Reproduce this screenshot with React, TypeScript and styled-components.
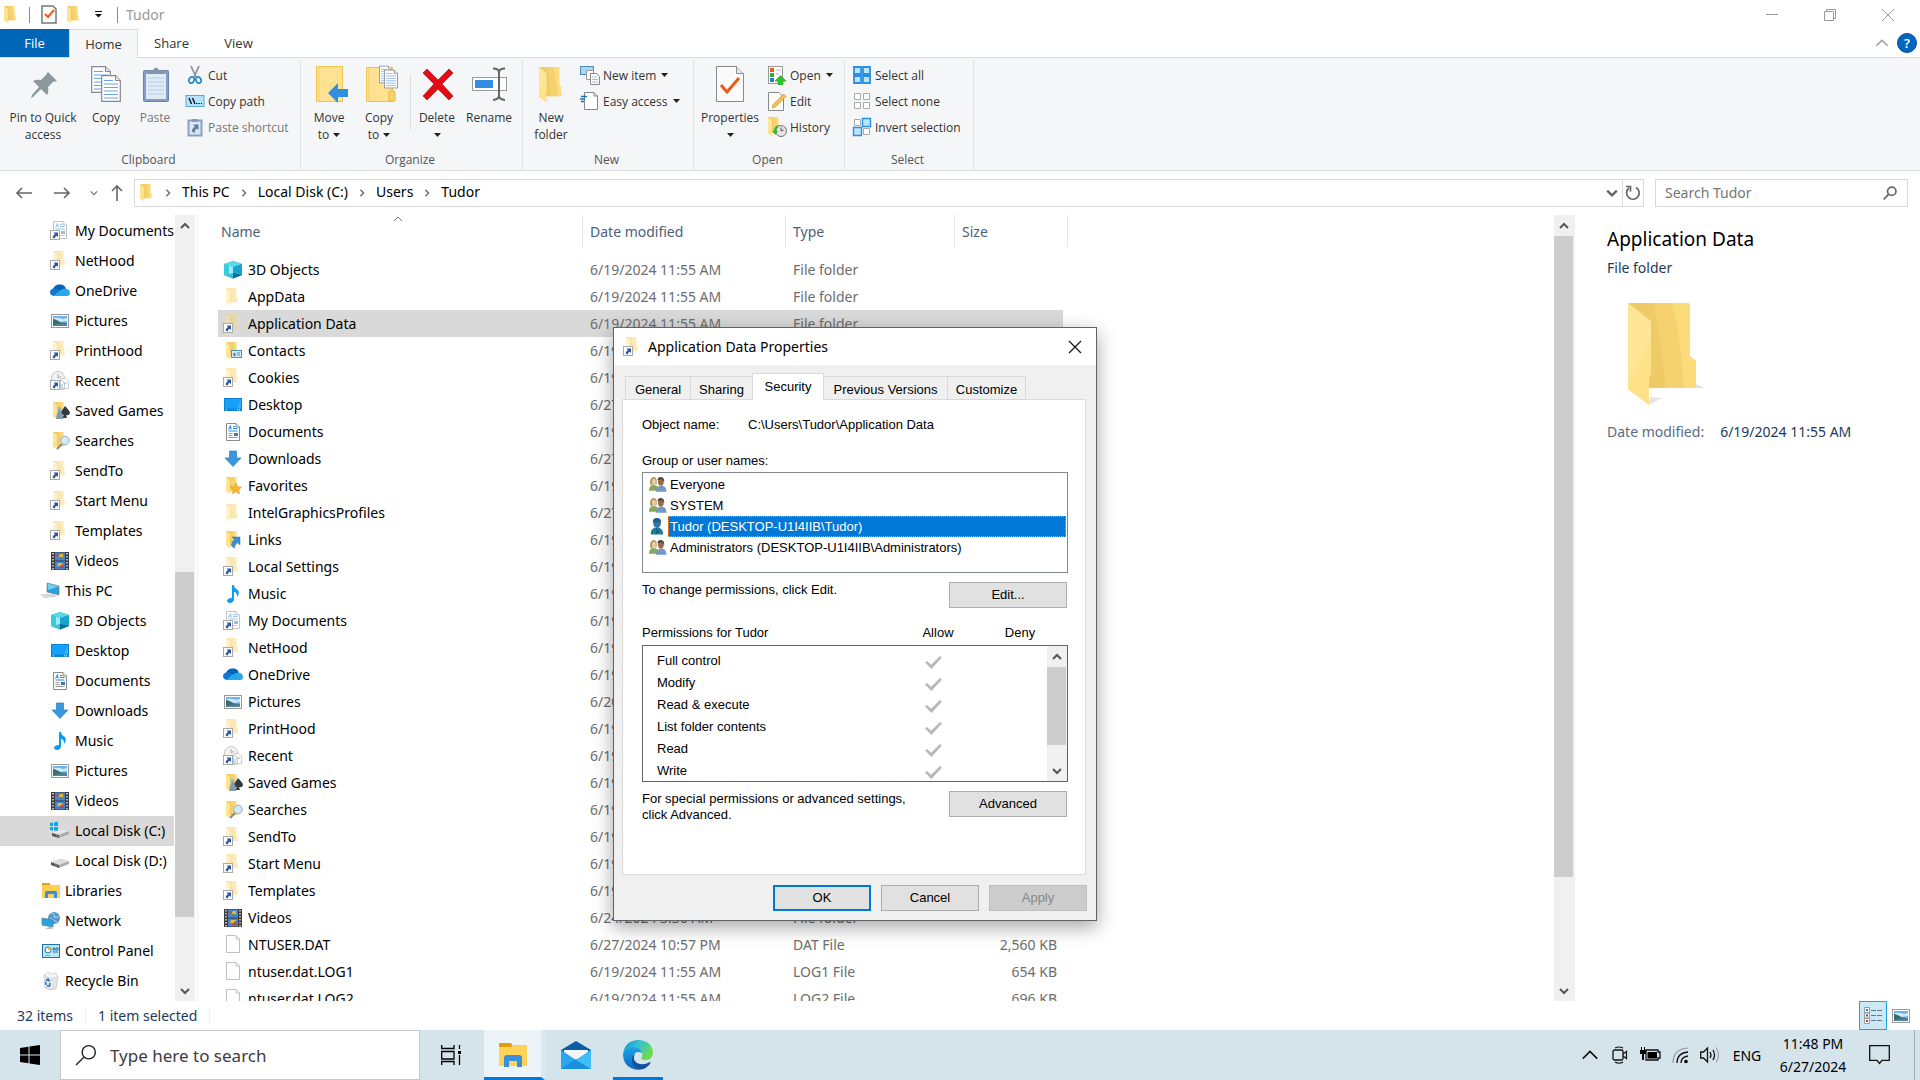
import React from "react";
import styled, { createGlobalStyle, css } from "styled-components";

const ui = `"Noto Sans", "Open Sans", sans-serif`;
const ribbonUi = `"Open Sans", "Noto Sans", sans-serif`;
const classic = `"Liberation Sans", Arial, sans-serif`;

const Global = createGlobalStyle`
  * { box-sizing: border-box; }
  body { margin: 0; background: #fff; font: 14px/20px ${ui}; color: #000; overflow: hidden; }
  button, input { font: inherit; color: inherit; }
  button { border: 0; padding: 0; background: none; }
  ul { list-style: none; margin: 0; padding: 0; }
  a { color: inherit; text-decoration: none; }
  svg { display: block; flex: none; }
`;

/* ---------- drawings ---------- */

const FolderShape = ({ x = 3, y = 1, w = 13, h = 17, pale = false }: { x?: number; y?: number; w?: number; h?: number; pale?: boolean }) => (
  <svg x={x} y={y} width={w} height={h} viewBox="0 0 76 102" preserveAspectRatio="none" opacity={pale ? 0.5 : 1}>
    <path d="M21 102L34 95 22 94zM68 85h9l-9-4z" fill="#e4e4e4" />
    <path d="M0 0H60Q62 0 62 2V53L68 58V85H21L10 50z" fill="#fbdb7a" />
    <path d="M0 0H26Q34 40 38 85H21L10 50z" fill="#efcb66" />
    <path d="M26 0H44Q54 40 56 85H38Q34 40 26 0z" fill="#f5d26f" />
    <path d="M0 0L23 18V71L21 75V102L0 86z" fill="#ffe596" />
    <path d="M23 36V71L21 75V102L0 86V80z" fill="#ffe18a" />
  </svg>
);

const Link = () => (
  <g>
    <rect x=".5" y="9.5" width="9" height="9" fill="#fff" stroke="#aaa" />
    <path d="M3.500 11.500H8V16L6.500 14.700Q5 15.600 4.800 17.400L2.500 16.600Q3 14 5 13z" fill="#2c56a0" />
  </g>
);

const Doc = ({ x = 3, y = 1 }: { x?: number; y?: number }) => (
  <g transform={`translate(${x} ${y})`}>
    <path d="M.5.5H10L13.500 4V17.500H.5z" fill="#fff" stroke="#8a8a8a" />
    <path d="M10 .5V4H13.500" fill="#eee" stroke="#8a8a8a" />
    <path d="M2.500 6.500L4.500 2.500 5.200 6.500M3 5h2M7 3.500h2M7 5.500h4.500M2.500 8h9" stroke="#2a8fd8" fill="none" />
    <path d="M2.500 10.500h4M2.500 12.500h4M2.500 14.500h9" stroke="#999" />
    <rect x="8" y="10" width="4" height="3" fill="#3b7bb5" />
  </g>
);

const LinkedFolder = () => <><FolderShape pale y={0} /><Link /></>;

const glyphs: Record<string, React.ReactNode> = {
  folder: <FolderShape />,
  pale: <FolderShape pale />,
  link: <LinkedFolder />,
  mydocs: <><g opacity=".5"><Doc x={3} y={0} /></g><Link /></>,
  onedrive: <><path d="M3 8Q5 3 10 3.500Q14 3 16 7.500L8 12z" fill="#0364b8" /><path d="M4 15Q0 14.500 0 11Q.5 7.500 4 7.500Q8 7 11 11z" fill="#0f78d4" /><path d="M4 15Q9 9 13 8Q19.500 7 20 12Q20 15 17 15z" fill="#28a8ea" /></>,
  pictures: <><rect x="1.500" y="3.500" width="17" height="13" fill="#fff" stroke="#999" /><path d="M3 5H17V12H3z" fill="#6db4ee" /><path d="M3 7Q8 6 13 8L17 7V10L10 11z" fill="#cfe9fa" /><path d="M3 8Q8 9 11 11.500L17 12V15H3z" fill="#376e66" /><path d="M6 13l11-1v3H3z" fill="#557fa5" /></>,
  recent: <><circle cx="8" cy="7" r="6.500" fill="#f4f4f4" stroke="#c5c5c5" /><path d="M8 3v4l3-2" stroke="#aaa" fill="none" /><path d="M10.500 7.500h5l3 3v7h-8zM7.500 9.500h5l2 2v7h-7z" fill="#fff" stroke="#ccc" /><path d="M9 14h4M9 16h4M13 12h4" stroke="#8dbce4" /><Link /></>,
  games: <><FolderShape /><path d="M15 5Q20 10 20 12Q19 15 16 14L17 17H12L14 14Q10 14 11 11z" fill="#333a40" /><circle cx="9.500" cy="8" r="2.200" fill="#9eb9cb" /><path d="M9.500 8Q13 12 13 18H6Q6 13 9.500 8z" fill="#7f9bad" /></>,
  searches: <><FolderShape /><path d="M7 18l5-5" stroke="#888" strokeWidth="2" /><circle cx="15" cy="9.500" r="4.300" fill="#cfe9fa" stroke="#9aaebb" /></>,
  videos: <><path d="M1 1H19V19H1z" fill="#3b3b3b" /><path d="M5 1.500h10v8H5zM5 10.500h10v8H5z" fill="#4484d0" /><path d="M10 3h3v4h-5zM8 12h5l-1 3H7z" fill="#e9b933" /><path d="M6 3l3 1-1 3zM12 13l2 4h-5z" fill="#c2453b" /><path d="M9 6h4l-3 2z" fill="#3c8a4a" /><path d="M3 2v17M17 2v17" stroke="#ddd" strokeWidth="1.500" strokeDasharray="1.500 1.500" /></>,
  pc: <><path d="M6 2L18 5V14L6 11z" fill="#2c9fd9" stroke="#777" strokeWidth=".6" /><path d="M6.500 2.500L17.500 5.500 7 9z" fill="#6dd0f7" /><path d="M11 13l4 2-4 1zM0 14l8-1 3 2-7 2z" fill="#ddd" stroke="#bbb" strokeWidth=".5" /></>,
  cube: <><path d="M10 1L19 4V15L10 18.500 1 15V4z" fill="#15a5cf" /><path d="M10 1L19 4 10 7 1 4z" fill="#5bdae5" /><path d="M1 4L10 7V18.500L1 15z" fill="#9eedf4" /><path d="M1 4L6 5.500V14L1 15z" fill="#37cbdc" /><path d="M10 13L19 15 10 18.500z" fill="#096b99" /><path d="M10 13V18.500L1 15z" fill="#3dbfda" /></>,
  desktop: <><rect x="1" y="3" width="18" height="13" fill="#0b84d8" /><path d="M2 4H18V13.500H2z" fill="#16a0fa" /><path d="M14 13.500L18 4v9.500z" fill="#35b0ff" /><path d="M3 14.800h1M14 14.800h1M16 14.800h1" stroke="#fff" /></>,
  documents: <Doc />,
  downloads: <path d="M6.500 2h7v7h4.500L10 17.500 2 9H6.500z" fill="#3a96dd" stroke="#2d7fc4" strokeWidth=".7" />,
  music: <path d="M9 1h2q0 3 4 5 2 3-1 7 0-5-3-5v8q-1 3-4 3-3-.5-3-2.500 1-3 5-2.500z" fill="#0c9df2" />,
  osdisk: <><path d="M0 2l3-.5v3.500H0zM4 1.300l4-.5V5H4zM0 6h3v3.500L0 9zM4 6h4v4l-4-.5z" fill="#00adef" /><path d="M2 12L11 8 19 10 9 14z" fill="#e4e4e4" /><path d="M2 12L9 14V17L2 15z" fill="#555" /><path d="M9 14L19 10V13L9 17z" fill="#aaa" /><path d="M6 14.500l2 .5" stroke="#4c4" /></>,
  disk: <><path d="M1 11L11 7.500 19 10 9 14z" fill="#ddd" /><path d="M1 11L9 14V17L1 14z" fill="#555" /><path d="M9 14L19 10V13L9 17z" fill="#aaa" /><path d="M5 14l2 .7" stroke="#4c4" /></>,
  libraries: <><path d="M1 2H8L10 4H1z" fill="#e8a10c" /><path d="M1 4H19V17H1z" fill="#ffcf52" /><path d="M4 17V11.500Q4 10 5.500 10H14.500Q16 10 16 11.500V17H13V13H7V17z" fill="#3a8fdb" /></>,
  network: <><circle cx="13" cy="7" r="6" fill="#5199cc" /><path d="M10 2q5 1 3 4 4 1 5-1M9 7l7 4" stroke="#b5dff5" fill="none" /><path d="M1 7L12 9V16L1 14z" fill="#27a3dd" stroke="#4f7a95" strokeWidth=".7" /><path d="M4 18h8l-2-2H8z" fill="#bbb" /></>,
  control: <><rect x="1.500" y="3.500" width="17" height="13" fill="#bce6fb" stroke="#1673ac" /><circle cx="7" cy="9" r="3" fill="#fff" stroke="#1673ac" /><path d="M7 9V6a3 3 0 0 1 3 3z" fill="#f5b91c" /><path d="M12 7h2v2h-2zM15 7h2v2h-2zM12 11h5" stroke="#1673ac" fill="#fff" /><path d="M4 14.500h5" stroke="#f28c1c" /></>,
  recycle: <><path d="M3 4L14 3 17 6 15 18 9 19 4 17z" fill="#e3e5e7" stroke="#bbb" strokeWidth=".6" /><path d="M3 4l4-3 4 2 4-1 2 4-7 2z" fill="#f5f5f5" stroke="#c5c5c5" strokeWidth=".6" /><path d="M5 10l2-2 1.500 2.500M9 12l-.5 3H6M5 14l-.5-3" stroke="#2274c7" strokeWidth="1.500" fill="none" /></>,
  contacts: <><FolderShape /><rect x="8.500" y="9.500" width="10" height="7" fill="#cdeafa" stroke="#4c93c0" /><path d="M10.500 15v-3h2v3z" fill="#54748a" /><path d="M14 12h3M14 14h3" stroke="#4c93c0" /></>,
  favorites: <><FolderShape /><path d="M13 7l1.700 3.700 4 .4-3 2.800.9 4.100-3.600-2.200-3.600 2 .9-3.900-3-2.800 4-.4z" fill="#f8b530" stroke="#d99422" strokeWidth=".5" /></>,
  links: <><FolderShape /><path d="M9 7h8v8l-2.500-2.500Q11.500 14 11.500 18L8.500 16Q8.500 12 11.500 9.500z" fill="#3a8fd6" stroke="#2b70b5" strokeWidth=".5" /></>,
  file: <><path d="M3.500.5H13L16.500 4V17.500H3.500z" fill="#fff" stroke="#c0c0c0" /><path d="M13 .5V4H16.500" fill="none" stroke="#c0c0c0" /></>,
  group: <><path d="M0 16Q0 10 5 10 10 10 11 16z" fill="#86a860" /><path d="M1.500 10Q0 2 5 1.500 9 2 8 9z" fill="#b3935a" /><ellipse cx="5.200" cy="6.500" rx="2" ry="3.200" fill="#edcda9" /><path d="M7 17Q8 11 13 10.500 18 10.500 18.500 17z" fill="#7497c4" /><ellipse cx="12.500" cy="6.800" rx="3" ry="3.800" fill="#966a4b" /><path d="M9 5Q9 1.500 12.500 1.500 16.500 2 16 7L14 4z" fill="#50443c" /></>,
  user: <><path d="M2 18Q1 12 7 10.500H10Q15 12 15 18z" fill="#1d7f96" /><path d="M8 11l3 4-4 3z" fill="#155f73" /><ellipse cx="8.500" cy="6" rx="4" ry="5" fill="#2e78ad" /><path d="M4 5Q4 0 9 .5 13 1 12.500 5z" fill="#215e8c" /></>,
  cut: <><path d="M6 1l5 11M14 1L9 12" stroke="#8d9699" strokeWidth="1.800" /><ellipse cx="6.500" cy="15" rx="2.500" ry="3.200" fill="none" stroke="#1d86cf" strokeWidth="1.700" transform="rotate(25 6.500 15)" /><ellipse cx="13.500" cy="15" rx="2.500" ry="3.200" fill="none" stroke="#1d86cf" strokeWidth="1.700" transform="rotate(-25 13.500 15)" /></>,
  path: <><rect x="1" y="4.500" width="18" height="11" fill="#b5e3fb" stroke="#5ea9d6" /><path d="M4 7l2.500 6M7.500 7L10 13" stroke="#111" strokeWidth="1.400" /><path d="M11 12.500h6" stroke="#111" strokeDasharray="1.400 1" /></>,
  pastelink: <><rect x="3.500" y="3.500" width="13" height="15" fill="#dae6f4" stroke="#86a0c4" strokeWidth="2" /><path d="M7 2h6v3H7z" fill="#8a9bb3" /><path d="M8 7.500h5.500V13l-1.800-1.600Q9.500 13 9.500 16L6.800 14.500Q7 11.500 9.800 9.500z" fill="#607d9c" /></>,
  newitem: <><rect x=".5" y="1.500" width="13" height="8" fill="#a8d8f5" stroke="#4d8bb5" /><path d="M6.500 5.500h7v9h-7z" fill="#fff" stroke="#999" /><path d="M10.500 8.500h6l3 3v8h-9z" fill="#fff" stroke="#888" /><path d="M12 12h5M12 14.500h6M12 17h6" stroke="#9bbbe0" /></>,
  easy: <><path d="M4.500 1.500H14L17.500 5V18.500H4.500z" fill="#fff" stroke="#888" /><path d="M14 1.500V5H17.500" fill="none" stroke="#888" /><path d="M1 5.500h6M0 8h5M1 10.500h3" stroke="#1d6fb5" strokeWidth="1.300" /></>,
  open: <><rect x="1.500" y="1.500" width="14" height="17" fill="#fff" stroke="#999" /><path d="M3 3h4v4H3z" fill="#ee5a1c" /><path d="M3 8h4v4H3z" fill="#2eaf2e" /><path d="M3 13h4v4H3z" fill="#1d80d2" /><path d="M9 5h5M9 9h3" stroke="#bbb" /><path d="M13.500 10.500L19 16H16V19.500H11V16H8z" fill="#2dc42d" stroke="#169616" strokeWidth=".6" /></>,
  edit: <><path d="M1.500 1.500H12L16.500 6V19.500H1.500z" fill="#fff" stroke="#888" /><path d="M5 17l1-3.500L16.500 3 19 5.500 8.500 16z" fill="#f6bd4a" stroke="#c98f2a" strokeWidth=".6" /></>,
  history: <><FolderShape x={1} y={0} w={13} h={19} /><circle cx="14" cy="14" r="5.500" fill="#e4e4e4" stroke="#777" /><path d="M14 10.500V14l2.500-1" stroke="#555" fill="none" /><path d="M12 8Q7 9 7 14L5 14 8.500 18 11 14H9.500Q10 11 12 8z" fill="#2eb83a" /></>,
  all: <path d="M2 2h7v7H2zM11 2h7v7h-7zM2 11h7v7H2zM11 11h7v7h-7z" fill="#bfe3fb" stroke="#2a8fe0" strokeWidth="1.800" />,
  none: <path d="M2.500 2.500h6v6h-6zM11.500 2.500h6v6h-6zM2.500 11.500h6v6h-6zM11.500 11.500h6v6h-6z" fill="#fff" stroke="#aaa" />,
  invert: <><path d="M2.500 2.500h6v6h-6zM11.500 11.500h6v6h-6z" fill="#fff" stroke="#aaa" /><path d="M10.500 1.500h8v8h-8zM1.500 10.500h8v8h-8z" fill="#bfe3fb" stroke="#2a8fe0" strokeWidth="1.400" /></>,
};

const Glyph = ({ name }: { name: string }) => <svg width="20" height="20" viewBox="0 0 20 20">{glyphs[name]}</svg>;

const Page = ({ x, y, w, h }: { x: number; y: number; w: number; h: number }) => (
  <svg x={x} y={y} width={w} height={h} viewBox="0 0 20 27">
    <path d="M.7.7H14.500L19.300 5.500V26.300H.7z" fill="#fff" stroke="#85898c" strokeWidth="1.200" />
    <path d="M14.500.7V5.500H19.300" fill="#e5e8ea" stroke="#85898c" />
    <path d="M3 5.500h9M3 9h14M3 12.500h14M3 16h14M3 19.500h14M3 23h14" stroke="#6aa1ec" />
  </svg>
);

const bigGlyphs: Record<string, React.ReactNode> = {
  pin: <path d="M24 7L33 16 29 17 24 22Q25 27 23 30L17 24 9 32 7 33 8 30 15 22 9 16Q13 14 17 15L22 10z" fill="#8b999f" />,
  copy: <><Page x={4} y={1} w={20} h={27} /><Page x={14} y={10} w={20} h={27} /></>,
  paste: <><rect x="7.500" y="5.500" width="25" height="31" rx="1" fill="#829ec4" stroke="#6985ac" /><path d="M10 9h20v25H10z" fill="#dfeaf5" /><path d="M12 13h16M12 17h16M12 21h16M12 25h16M12 29h16" stroke="#b5cfe7" /><path d="M12 9V5h5q3-5 6 0h5v4z" fill="#8594a8" /></>,
  move: <><path d="M6.500 1.500h26v35h-26z" fill="#fee291" stroke="#efc64b" /><path d="M9 2v34" stroke="#efcf69" /><path d="M18 28L28 18V24H38V32H28V38z" fill="#318fe0" /></>,
  copyto: <><path d="M6.500 2.500h26v34h-26z" fill="#fee291" stroke="#efc64b" /><path d="M9 3v33" stroke="#efcf69" /><path d="M29 36V27l3-3 3 3v9z" fill="#f8d36b" stroke="#e4b83c" /><Page x={19} y={0} w={13} h={19} /><Page x={24} y={4} w={14} h={20} /></>,
  delete: <path d="M5 8L9 4 20 15 31 4 35 8 24 19 35 31 31 35 20 24 9 35 5 31 16 19z" fill="#e30c14" stroke="#a60409" strokeWidth=".6" />,
  rename: <><rect x="2.500" y="12.500" width="34" height="13" fill="#fff" stroke="#999" /><path d="M5 15h18v8H5z" fill="#348fe2" /><path d="M23 3.500Q28.500 3.500 29 7V31Q28.500 34.500 23 35M35 3.500Q29.500 3.500 29 7V31Q29.500 34.500 35 35" fill="none" stroke="#666" strokeWidth="2" /></>,
  newfolder: <FolderShape x={7} y={2} w={25} h={35} />,
  properties: <><path d="M5.500 1.500H25.500L32.500 8.500V36.500H5.500z" fill="#fafafa" stroke="#8b8b8b" /><path d="M25.500 1.500V8.500H32.500" fill="#e5e8ea" stroke="#8b8b8b" /><path d="M10 20L16 27 28 13" fill="none" stroke="#ee5a12" strokeWidth="3" /></>,
};
const BigGlyph = ({ name }: { name: string }) => <svg width="38" height="40" viewBox="0 0 38 40">{bigGlyphs[name]}</svg>;

const Chevron = ({ dir = "down", size = 10, color = "#555", weight = 2 }: { dir?: "up" | "down" | "right"; size?: number; color?: string; weight?: number }) => (
  <svg width={size} height={size} viewBox="0 0 10 10">
    <path d={{ up: "M1 7L5 3 9 7", down: "M1 3L5 7 9 3", right: "M3 1L7 5 3 9" }[dir]} fill="none" stroke={color} strokeWidth={weight} />
  </svg>
);
const Caret = () => <svg width="7" height="4" viewBox="0 0 7 4"><path d="M0 0H7L3.500 4z" fill="#222" /></svg>;

const Magnifier = ({ size, color, weight }: { size: number; color: string; weight: number }) => (
  <svg width={size} height={size} viewBox="0 0 20 20">
    <circle cx="12.500" cy="7.500" r="6" fill="none" stroke={color} strokeWidth={weight} />
    <path d="M8 12L1 19" stroke={color} strokeWidth={weight} />
  </svg>
);

/* ---------- window frame ---------- */

const Screen = styled.div`display: flex; flex-direction: column; height: 100vh;`;

const TitleBar = styled.header`display: flex; align-items: center; height: 29px; padding-right: 3px; color: #999; flex: none;`;
const QuickTools = styled.div`display: flex; align-items: center; flex: 1; gap: 4px;`;
const QuickButton = styled.button`display: grid; place-items: center; width: 21px; height: 24px;`;
const Bar = styled.i`width: 1px; height: 16px; background: #888; margin: 0 4px;`;
const CaptionButton = styled.button`display: grid; place-items: center; width: 58px; height: 29px;`;

const TabStrip = styled.nav`display: flex; height: 29px; flex: none; border-bottom: 1px solid #dadbdc; color: #333; font: 13px/20px ${ribbonUi};`;
const RibbonTab = styled.button<{ $kind?: "file" | "active" }>`
  width: 67px; height: 28px; text-align: center;
  ${p => p.$kind === "file" && css`width: 69px; background: #0067b8; color: #fff;`}
  ${p => p.$kind === "active" && css`height: 29px; width: 69px; background: #f5f6f7; border: 1px solid #dadbdc; border-bottom: 0;`}
`;
const TabTail = styled.div`margin-left: auto; display: flex; align-items: center; gap: 8px; padding-right: 3px;`;
const Help = styled.button`width: 20px; height: 20px; border-radius: 50%; background: #0067c0; border: 1px solid #124a80; color: #fff; font-weight: 600; line-height: 16px;`;

const Ribbon = styled.div`display: flex; height: 113px; flex: none; padding: 2px 0 1px; background: #f5f6f7; border-bottom: 1px solid #dadbdc; font: 12px/17px ${ribbonUi}; color: #333;`;
const Group = styled.section<{ $w: number }>`display: flex; flex-direction: column; min-width: ${p => p.$w}px; border-right: 1px solid #e0e1e2;`;
const GroupBody = styled.div`display: flex; flex: 1; padding: 5px 3px 0;`;
const GroupName = styled.h2`margin: 0; font: 12px/17px ${ribbonUi}; color: #555; text-align: center; padding: 0 3px 1px 0;`;
const BigTool = styled.button<{ $w: number }>`
  display: flex; flex-direction: column; align-items: center; justify-content: flex-start; width: ${p => p.$w}px; line-height: 17px; white-space: nowrap;
  span { display: flex; align-items: center; gap: 4px; min-height: 17px; }
  svg + span { margin-top: 4px; }
  &:disabled { color: #777; }
`;
const ToolStack = styled.div`display: flex; flex-direction: column; padding-left: 4px; margin-top: -3px;`;
const SmallTool = styled.button`display: flex; align-items: center; gap: 3px; height: 26px; white-space: nowrap; svg:last-child:not(:first-child) { margin-left: 2px; } &:disabled { color: #777; }`;
const ToolRule = styled.i`width: 1px; height: 55px; margin: 10px 0 0 6px; background: #dcdddf;`;

const AddressRow = styled.div`display: flex; align-items: center; height: 44px; flex: none; padding-right: 12px;`;
const History = styled.div`display: flex; align-items: center; width: 134px; padding-left: 14px;`;
const HistoryButton = styled.button<{ $w: number }>`display: grid; place-items: center; flex: none; width: ${p => p.$w}px; height: 26px;`;
const AddressBox = styled.div`display: flex; align-items: center; flex: 1; height: 28px; border: 1px solid #d9d9d9; padding-left: 2px;`;
const Crumbs = styled.nav`display: flex; align-items: center; flex: 1; gap: 10px; padding-left: 7px; a { padding-bottom: 2px; }`;
const BoxButton = styled.button`display: grid; place-items: center; width: 21px; height: 26px; & + & { border-left: 1px solid #d9d9d9; }`;
const SearchBox = styled.label`
  display: flex; align-items: center; width: 253px; height: 28px; margin-left: 11px; padding: 0 10px 0 9px; border: 1px solid #d9d9d9;
  input { flex: 1; min-width: 0; border: 0; outline: 0; background: none; padding: 0; }
  input::placeholder { color: #757575; opacity: 1; }
`;

/* ---------- panes ---------- */

const Panes = styled.main`display: flex; flex: 1; min-height: 0;`;
const TreePane = styled.aside`display: flex; width: 198px; border-right: 1px solid #f0f0f0; overflow: hidden;`;
const Tree = styled.ul`width: 174px; margin-right: 1px; padding-top: 1px; overflow: hidden;`;
const TreeItem = styled.a<{ $deep: boolean; $on: boolean }>`
  display: flex; align-items: center; height: 30px; white-space: nowrap;
  gap: ${p => (p.$deep ? 5 : 4)}px; padding-left: ${p => (p.$deep ? 50 : 41)}px;
  background: ${p => (p.$on ? "#d9d9d9" : "none")};
`;

const Track = styled.div<{ $w: number }>`display: flex; flex-direction: column; width: ${p => p.$w}px; background: #f0f0f0; flex: none;`;
const TrackEnd = styled.button`display: grid; place-items: center; width: 100%; height: 21px; flex: none;`;
const TrackSpace = styled.i<{ $grow: number; $thumb?: boolean }>`flex: ${p => p.$grow} 0 0px; margin-right: 1px; background: ${p => (p.$thumb ? "#cdcdcd" : "none")};`;

const Scrollbar = ({ before, thumb, after, w = 20 }: { before: number; thumb: number; after: number; w?: number }) => (
  <Track $w={w}>
    <TrackEnd aria-label="Scroll up"><Chevron dir="up" /></TrackEnd>
    <TrackSpace $grow={before} /><TrackSpace $grow={thumb} $thumb /><TrackSpace $grow={after} />
    <TrackEnd aria-label="Scroll down"><Chevron /></TrackEnd>
  </Track>
);

const ListPane = styled.section`flex: 1; min-width: 0; padding-left: 20px; overflow: hidden;`;
const FileTable = styled.table`
  table-layout: fixed; width: 850px; border-collapse: separate; border-spacing: 0; color: #6d6d6d;
  th { height: 32px; padding: 1px 0 0 7px; border-right: 1px solid #e5e5e5; font-weight: 400; text-align: left; color: #4c607a; }
  th:first-child { padding-left: 3px; }
  td { height: 27px; padding: 0 0 0 7px; white-space: nowrap; }
  td:first-child { color: #000; padding-left: 5px; }
  td:last-child { text-align: right; padding-right: 6px; border-right: 5px solid #fff; }
  thead::after { content: ""; display: block; height: 9px; }
`;
const SortHead = styled.div`position: relative; svg { position: absolute; left: 172px; top: -8px; }`;
const FileRow = styled.tr<{ $on: boolean }>`background: ${p => (p.$on ? "#d9d9d9" : "none")};`;
const FileName = styled.div`display: flex; align-items: center; gap: 5px;`;

const Preview = styled.aside`width: 346px; border-left: 1px solid #f0f0f0; padding: 10px 0 0 32px; color: #1e395b;`;
const PreviewTitle = styled.h1`margin: 0; font: 19px/28px ${ui}; color: #000;`;
const PreviewKind = styled.p`margin: 5px 0 25px;`;
const Facts = styled.dl`display: flex; gap: 16px; margin: 17px 0 0; dt { color: #5a6b80; } dd { margin: 0; }`;

const StatusBar = styled.footer`display: flex; align-items: center; height: 29px; flex: none; color: #1e395b; padding: 0 9px 0 17px;`;
const StatusText = styled.span`padding-right: 12px; margin-right: 12px; line-height: 14px; border-right: 1px solid #eee;`;
const ViewButtons = styled.div`display: flex; margin-left: auto; gap: 4px;`;
const ViewButton = styled.button<{ $on?: boolean }>`display: grid; place-items: center; height: 29px; width: ${p => (p.$on ? 28 : 20)}px; ${p => p.$on && css`background: #cce8f7; border: 1px solid #26a0da;`}`;

/* ---------- properties dialog ---------- */

const Dialog = styled.section`
  position: absolute; left: 613px; top: 327px; width: 484px; border: 1px solid #5f6366; background: #f0f0f0;
  box-shadow: 0 6px 18px rgba(0,0,0,.36); font: 13px/16px ${classic};
`;
const DialogTitle = styled.header`display: flex; align-items: center; gap: 5px; height: 37px; padding: 0 11px 0 9px; background: #fff; font: 14px/20px ${ui}; button { margin-left: auto; }`;
const DialogBody = styled.div`padding: 8px 10px 9px 8px;`;
const DialogTabs = styled.div`display: flex; align-items: flex-end; height: 27px; margin-bottom: -1px; padding-left: 3px;`;
const DialogTab = styled.button<{ $w: number; $on?: boolean }>`
  width: ${p => p.$w}px; height: 24px; border: 1px solid #d9d9d9; margin-right: -1px; background: #f0f0f0; padding-top: 3px;
  ${p => p.$on && css`height: 27px; background: #fff; border-bottom-color: #fff; position: relative; padding: 0;`}
`;
const Sheet = styled.div`height: 476px; border: 1px solid #dcdcdc; background: #fff; padding: 17px 17px 0 19px;`;
const ObjectRow = styled.div`display: grid; grid-template-columns: 106px 1fr; margin-bottom: 20px;`;
const Caption = styled.div`margin-bottom: 3px;`;
const Names = styled.ul`height: 101px; border: 1px solid #828790; padding: 1px;`;
const NameItem = styled.li<{ $on: boolean }>`
  display: flex; align-items: center; height: 21px; padding-left: 5px;
  svg { width: 19px; height: 20px; }
  span { flex: 1; line-height: 19px; padding-left: 1px; border: 1px solid transparent; }
  ${p => p.$on && css`span { background: #0078d7; color: #fff; border: 1px dotted #ff9b3c; }`}
`;
const Split = styled.div`display: flex; justify-content: space-between; margin: 9px 1px 0 0;`;
const Push = styled.button<{ $w: number; $primary?: boolean }>`
  width: ${p => p.$w}px; height: 26px; background: #e1e1e1; border: ${p => (p.$primary ? "2px solid #0078d7" : "1px solid #adadad")};
  &:disabled { background: #ccc; border-color: #bfbfbf; color: #888; }
`;
const PermHead = styled.div`display: grid; grid-template-columns: 1fr 82px 82px; padding-right: 7px; margin: 17px 0 4px; text-align: center; span:first-child { text-align: left; }`;
const PermBox = styled.div`display: flex; height: 137px; border: 1px solid #646464; overflow: hidden;`;
const PermScroll = styled.div`flex: 1; overflow: hidden; padding-top: 4px;`;
const PermTable = styled.table`
  width: 100%; border-collapse: collapse;
  td, th { height: 22px; padding: 0; font-weight: 400; text-align: left; }
  th { padding-left: 14px; } td { width: 122px; }
`;
const Tick = styled.input`
  appearance: none; display: block; width: 17px; height: 13px; margin: 3px 0 0; background: #b8b8b8;
  clip-path: polygon(0 50%, 12% 38%, 36% 68%, 88% 0, 100% 12%, 38% 100%);
`;
const DialogFoot = styled.footer`display: flex; justify-content: flex-end; gap: 10px; padding-top: 10px; margin-right: -1px;`;

/* ---------- taskbar ---------- */

const Taskbar = styled.footer`display: flex; height: 50px; flex: none; background: #d5e3ea; line-height: 23px;`;
const StartButton = styled.button`display: grid; place-items: center; width: 60px;`;
const TaskSearch = styled.label`
  display: flex; align-items: center; gap: 13px; width: 360px; padding-left: 14px; background: #fff; border: 1px solid #c8c8c8; font-size: 17px;
  input { border: 0; outline: 0; padding: 0; flex: 1; min-width: 0; background: none; }
  input::placeholder { color: #3c3c3c; opacity: 1; }
`;
const TaskButton = styled.button<{ $w?: number; $active?: boolean; $running?: boolean }>`
  display: grid; place-items: center; width: ${p => p.$w ?? 62}px; border-bottom: 3px solid transparent; padding-top: 2px;
  ${p => p.$running && css`border-color: #0078d7;`}
  ${p => p.$active && css`background: #ecf4f8; border-right: 4px solid #d9e8f1;`}
`;
const Tray = styled.div`display: flex; align-items: center; margin-left: auto; font-size: 14px;`;
const TrayButton = styled.button<{ $w: number }>`display: grid; place-items: center; width: ${p => p.$w}px; height: 50px;`;
const Clock = styled.time`width: 88px; text-align: center; white-space: pre-line;`;
const ShowDesktop = styled.button`width: 6px; height: 50px; border-left: 1px solid #98aab4;`;

/* ---------- data ---------- */

const tree: [string, string, boolean][] = [
  ["mydocs", "My Documents", true], ["link", "NetHood", true], ["onedrive", "OneDrive", true], ["pictures", "Pictures", true],
  ["link", "PrintHood", true], ["recent", "Recent", true], ["games", "Saved Games", true], ["searches", "Searches", true],
  ["link", "SendTo", true], ["link", "Start Menu", true], ["link", "Templates", true], ["videos", "Videos", true],
  ["pc", "This PC", false], ["cube", "3D Objects", true], ["desktop", "Desktop", true], ["documents", "Documents", true],
  ["downloads", "Downloads", true], ["music", "Music", true], ["pictures", "Pictures", true], ["videos", "Videos", true],
  ["osdisk", "Local Disk (C:)", true], ["disk", "Local Disk (D:)", true], ["libraries", "Libraries", false],
  ["network", "Network", false], ["control", "Control Panel", false], ["recycle", "Recycle Bin", false],
];

const d19 = "6/19/2024 11:55 AM";
const d27 = "6/27/2024 10:57 PM";
const files: [string, string, string?, string?, string?][] = [
  ["cube", "3D Objects"], ["pale", "AppData"], ["link", "Application Data"], ["contacts", "Contacts"], ["link", "Cookies"],
  ["desktop", "Desktop", d27], ["documents", "Documents"], ["downloads", "Downloads", d27], ["favorites", "Favorites"],
  ["pale", "IntelGraphicsProfiles", d27], ["links", "Links"], ["link", "Local Settings"], ["music", "Music"],
  ["mydocs", "My Documents"], ["link", "NetHood"], ["onedrive", "OneDrive"], ["pictures", "Pictures", "6/20/2024 11:55 AM"],
  ["link", "PrintHood"], ["recent", "Recent"], ["games", "Saved Games"], ["searches", "Searches"], ["link", "SendTo"],
  ["link", "Start Menu"], ["link", "Templates"], ["videos", "Videos", "6/24/2024 3:30 AM"],
  ["file", "NTUSER.DAT", d27, "DAT File", "2,560 KB"], ["file", "ntuser.dat.LOG1", d19, "LOG1 File", "654 KB"],
  ["file", "ntuser.dat.LOG2", d19, "LOG2 File", "696 KB"],
];

const users = ["Everyone", "SYSTEM", "Tudor (DESKTOP-U1I4IIB\\Tudor)", "Administrators (DESKTOP-U1I4IIB\\Administrators)"];
const permissions = ["Full control", "Modify", "Read & execute", "List folder contents", "Read", "Write"];

const Arrow = ({ d }: { d: string }) => <svg width="18" height="18" viewBox="0 0 18 18"><path d={d} fill="none" stroke="#666" strokeWidth="1.600" /></svg>;
const Small = ({ icon, children, caret, disabled }: { icon: string; children: string; caret?: boolean; disabled?: boolean }) => (
  <SmallTool disabled={disabled}><Glyph name={icon} /><span>{children}</span>{caret && <Caret />}</SmallTool>
);
const Big = ({ icon, lines, w, caret, disabled }: { icon: string; lines: string[]; w: number; caret?: boolean; disabled?: boolean }) => (
  <BigTool $w={w} disabled={disabled}>
    <BigGlyph name={icon} />
    {lines.map((t, i) => <span key={i}>{t}{caret && i === lines.length - 1 && <Caret />}</span>)}
  </BigTool>
);

const PropertiesDialog = () => (
  <Dialog role="dialog" aria-label="Application Data Properties">
    <DialogTitle>
      <Glyph name="link" />Application Data Properties
      <button aria-label="Close"><svg width="20" height="20" viewBox="0 0 20 20"><path d="M4 4L16 16M16 4L4 16" stroke="#111" strokeWidth="1.200" /></svg></button>
    </DialogTitle>
    <DialogBody>
      <DialogTabs role="tablist">
        <DialogTab role="tab" $w={66}>General</DialogTab>
        <DialogTab role="tab" $w={63}>Sharing</DialogTab>
        <DialogTab role="tab" $w={72} $on aria-selected>Security</DialogTab>
        <DialogTab role="tab" $w={125}>Previous Versions</DialogTab>
        <DialogTab role="tab" $w={79}>Customize</DialogTab>
      </DialogTabs>
      <Sheet>
        <ObjectRow><span>Object name:</span><span>C:\Users\Tudor\Application Data</span></ObjectRow>
        <Caption id="names">Group or user names:</Caption>
        <Names role="listbox" aria-labelledby="names">
          {users.map((u, i) => (
            <NameItem key={u} role="option" aria-selected={i === 2} $on={i === 2}><Glyph name={i === 2 ? "user" : "group"} /><span>{u}</span></NameItem>
          ))}
        </Names>
        <Split><span>To change permissions, click Edit.</span><Push $w={118}>Edit...</Push></Split>
        <PermHead><span>Permissions for Tudor</span><span>Allow</span><span>Deny</span></PermHead>
        <PermBox>
          <PermScroll>
            <PermTable>
              <tbody>
                {permissions.map((p, i) => (
                  <tr key={p}><th scope="row"><label htmlFor={`perm${i}`}>{p}</label></th><td><Tick id={`perm${i}`} type="checkbox" defaultChecked disabled /></td></tr>
                ))}
              </tbody>
            </PermTable>
          </PermScroll>
          <Scrollbar w={20} before={0} thumb={78} after={15} />
        </PermBox>
        <Split><span>For special permissions or advanced settings,<br />click Advanced.</span><Push $w={118}>Advanced</Push></Split>
      </Sheet>
      <DialogFoot><Push $w={98} $primary>OK</Push><Push $w={98}>Cancel</Push><Push $w={98} disabled>Apply</Push></DialogFoot>
    </DialogBody>
  </Dialog>
);

export default function App() {
  return (
    <Screen>
      <Global />
      <TitleBar>
        <QuickTools>
          <QuickButton aria-label="Folder"><Glyph name="folder" /></QuickButton>
          <Bar />
          <QuickButton aria-label="Properties"><svg width="16" height="19" viewBox="0 0 16 19"><path d="M1 1H12L15 4V18H1z" fill="#fff" stroke="#777" strokeWidth="1.500" /><path d="M4 9L7 12 13 5" fill="none" stroke="#ee5a12" strokeWidth="2" /></svg></QuickButton>
          <QuickButton aria-label="New folder"><Glyph name="folder" /></QuickButton>
          <QuickButton aria-label="Customize"><svg width="7" height="7" viewBox="0 0 7 7"><path d="M0 .5H7" stroke="#111" /><path d="M0 3H7L3.500 6.500z" fill="#111" /></svg></QuickButton>
          <Bar />Tudor
        </QuickTools>
        <CaptionButton aria-label="Minimize"><svg width="12" height="12" viewBox="0 0 12 12"><path d="M0 5.500H12" stroke="#999" /></svg></CaptionButton>
        <CaptionButton aria-label="Restore"><svg width="12" height="12" viewBox="0 0 12 12"><path d="M.5 2.500H9.500V11.500H.5zM2.500 2.500V.5H11.500V9.500H9.500" fill="none" stroke="#999" /></svg></CaptionButton>
        <CaptionButton aria-label="Close"><svg width="12" height="12" viewBox="0 0 12 12"><path d="M0 0L12 12M12 0L0 12" stroke="#999" /></svg></CaptionButton>
      </TitleBar>
      <TabStrip>
        <RibbonTab $kind="file">File</RibbonTab><RibbonTab $kind="active">Home</RibbonTab><RibbonTab>Share</RibbonTab><RibbonTab>View</RibbonTab>
        <TabTail><Chevron dir="up" size={14} color="#999" weight={1} /><Help aria-label="Help">?</Help></TabTail>
      </TabStrip>
      <Ribbon>
        <Group $w={301}>
          <GroupBody>
            <Big icon="pin" lines={["Pin to Quick", "access"]} w={80} /><Big icon="copy" lines={["Copy"]} w={46} /><Big icon="paste" lines={["Paste"]} w={52} disabled />
            <ToolStack><Small icon="cut">Cut</Small><Small icon="path">Copy path</Small><Small icon="pastelink" disabled>Paste shortcut</Small></ToolStack>
          </GroupBody>
          <GroupName>Clipboard</GroupName>
        </Group>
        <Group $w={222}>
          <GroupBody>
            <Big icon="move" lines={["Move", "to"]} w={50} caret /><Big icon="copyto" lines={["Copy", "to"]} w={50} caret /><ToolRule />
            <Big icon="delete" lines={["Delete", ""]} w={52} caret /><Big icon="rename" lines={["Rename"]} w={52} />
          </GroupBody>
          <GroupName>Organize</GroupName>
        </Group>
        <Group $w={171}>
          <GroupBody>
            <Big icon="newfolder" lines={["New", "folder"]} w={50} />
            <ToolStack><Small icon="newitem" caret>New item</Small><Small icon="easy" caret>Easy access</Small></ToolStack>
          </GroupBody>
          <GroupName>New</GroupName>
        </Group>
        <Group $w={151}>
          <GroupBody>
            <Big icon="properties" lines={["Properties", ""]} w={66} caret />
            <ToolStack><Small icon="open" caret>Open</Small><Small icon="edit">Edit</Small><Small icon="history">History</Small></ToolStack>
          </GroupBody>
          <GroupName>Open</GroupName>
        </Group>
        <Group $w={129}>
          <GroupBody><ToolStack><Small icon="all">Select all</Small><Small icon="none">Select none</Small><Small icon="invert">Invert selection</Small></ToolStack></GroupBody>
          <GroupName>Select</GroupName>
        </Group>
      </Ribbon>
      <AddressRow>
        <History>
          <HistoryButton $w={20} aria-label="Back"><Arrow d="M17 9H2M7 4L2 9 7 14" /></HistoryButton>
          <HistoryButton $w={56} aria-label="Forward"><Arrow d="M1 9H16M11 4L16 9 11 14" /></HistoryButton>
          <HistoryButton $w={8} aria-label="Recent locations"><Chevron size={8} color="#777" weight={1.6} /></HistoryButton>
          <HistoryButton $w={38} aria-label="Up"><Arrow d="M9 17V2M4 7L9 2 14 7" /></HistoryButton>
        </History>
        <AddressBox>
          <Glyph name="folder" />
          <Crumbs>
            {["This PC", "Local Disk (C:)", "Users", "Tudor"].map(c => <React.Fragment key={c}><Chevron dir="right" size={8} color="#666" weight={1.6} /><a href="#">{c}</a></React.Fragment>)}
          </Crumbs>
          <BoxButton aria-label="Previous locations"><Chevron size={12} color="#666" /></BoxButton>
          <BoxButton aria-label="Refresh"><svg width="16" height="16" viewBox="0 0 16 16"><path d="M4 3A6.300 6.300 0 1 0 11 2.500M1 1.500H5.500V6.500" fill="none" stroke="#666" strokeWidth="1.700" /></svg></BoxButton>
        </AddressBox>
        <SearchBox><input aria-label="Search Tudor" placeholder="Search Tudor" /><Magnifier size={14} color="#666" weight={2.4} /></SearchBox>
      </AddressRow>
      <Panes>
        <TreePane>
          <Tree>
            {tree.map(([icon, name, deep], i) => <li key={i}><TreeItem href="#" $deep={deep} $on={name === "Local Disk (C:)"}><Glyph name={icon} />{name}</TreeItem></li>)}
          </Tree>
          <Scrollbar before={336} thumb={345} after={63} />
        </TreePane>
        <ListPane>
          <FileTable>
            <colgroup><col width="365" /><col width="203" /><col width="169" /><col width="113" /></colgroup>
            <thead><tr><th><SortHead>Name<Chevron dir="up" size={10} color="#777" weight={1} /></SortHead></th><th>Date modified</th><th>Type</th><th>Size</th></tr></thead>
            <tbody>
              {files.map(([icon, name, date = d19, kind = "File folder", size = ""]) => (
                <FileRow key={name} $on={name === "Application Data"}>
                  <td><FileName><Glyph name={icon} />{name}</FileName></td><td>{date}</td><td>{kind}</td><td>{size}</td>
                </FileRow>
              ))}
            </tbody>
          </FileTable>
        </ListPane>
        <Scrollbar before={0} thumb={641} after={103} />
        <Preview>
          <PreviewTitle>Application Data</PreviewTitle>
          <PreviewKind>File folder</PreviewKind>
          <svg width="100" height="102" viewBox="0 0 100 102"><FolderShape x={21} y={0} w={76} h={102} /></svg>
          <Facts><dt>Date modified:</dt><dd>{d19}</dd></Facts>
        </Preview>
      </Panes>
      <StatusBar>
        <StatusText>32 items</StatusText><StatusText>1 item selected</StatusText>
        <ViewButtons>
          <ViewButton $on aria-label="Details"><svg width="20" height="17" viewBox="0 0 20 17"><path d="M1.500.5h5v5h-5zM1.500 6h5v5h-5zM1.500 11.500h5v5h-5z" fill="#fff" stroke="#999" /><path d="M3 3h2" stroke="#2a7fc4" strokeWidth="2" /><path d="M3 8.500h2" stroke="#555" strokeWidth="2" /><path d="M3 14h2" stroke="#c33" strokeWidth="2" /><path d="M8 3.500h5M14 3.500h5M8 8.500h5M14 8.500h5M8 13.500h5M14 13.500h5" stroke="#678" /></svg></ViewButton>
          <ViewButton aria-label="Large icons"><Glyph name="pictures" /></ViewButton>
        </ViewButtons>
      </StatusBar>
      <Taskbar>
        <StartButton aria-label="Start"><svg width="20" height="20" viewBox="0 0 20 20"><path d="M0 3L8.500 1.800V9.500H0zM9.500 1.600L20 0V9.500H9.500zM0 10.500H8.500V18.200L0 17zM9.500 10.500H20V20L9.500 18.400z" /></svg></StartButton>
        <TaskSearch><Magnifier size={22} color="#222" weight={1.3} /><input aria-label="Type here to search" placeholder="Type here to search" /></TaskSearch>
        <TaskButton $w={62} aria-label="Task view"><svg width="20" height="20" viewBox="0 0 20 20"><path d="M.7 0V3.500H13V0M.7 6.500H13V14H.7zM.7 20V16.500H13V20M18.500 0V4M18.500 10V20" fill="none" stroke="#000" strokeWidth="1.300" /><path d="M17 6h3v3h-3z" /></svg></TaskButton>
        <TaskButton $w={2} tabIndex={-1} aria-hidden />
        <TaskButton $w={61} $active $running aria-label="File Explorer"><svg width="28" height="26" viewBox="0 0 28 26"><path d="M0 1h12l2 3v2H0z" fill="#e69c0b" /><path d="M0 5H12L14 3H28V24H0z" fill="#ffd35a" /><path d="M5 25V16Q5 13 8 13H20Q23 13 23 16V25H18V19H10V25z" fill="#3a8fdb" /></svg></TaskButton>
        <TaskButton $w={62} aria-label="Mail"><svg width="30" height="28" viewBox="0 0 30 28"><path d="M0 9L15 0 30 9V13H0z" fill="#0a5ea8" /><path d="M3 9H27V18H3z" fill="#f3f5f7" /><path d="M0 9L15 19 30 9V28H0z" fill="#29a6ec" /><path d="M0 28L15 18 30 28z" fill="#1a8fdf" /><path d="M15 19L30 9V28z" fill="#40bdf5" /></svg></TaskButton>
        <TaskButton $w={6} tabIndex={-1} aria-hidden />
        <TaskButton $w={50} $running aria-label="Microsoft Edge">
          <svg width="30" height="30" viewBox="0 0 30 30">
            <defs>
              <linearGradient id="edgeTop" x1="0" x2="1" y1="0" y2=".5"><stop stopColor="#168dcc" /><stop offset=".5" stopColor="#35c1d3" /><stop offset="1" stopColor="#6edc49" /></linearGradient>
              <linearGradient id="edgeLow" x1="0" x2="0" y1="0" y2="1"><stop stopColor="#1aa5e8" /><stop offset="1" stopColor="#0a66c2" /></linearGradient>
            </defs>
            <path d="M0 14Q2 0 16 0 29 1 30 13 29 21 21 20 17 19 19 17 21 11 14 8 5 6 0 14z" fill="url(#edgeTop)" />
            <path d="M0 14Q3 6 11 7 18 8 19 13 12 10 10 17 9 25 18 29 14 31 8 28 0 24 0 14z" fill="url(#edgeLow)" />
            <path d="M12 14Q9 20 14 23 20 26 27 22 28 22 27 24 22 30 16 29.500 8 26 9 18 10 15 12 14z" fill="#10539c" />
          </svg>
        </TaskButton>
        <Tray>
          <TrayButton $w={30} aria-label="Show hidden icons"><Chevron dir="up" size={18} color="#111" weight={0.9} /></TrayButton>
          <TrayButton $w={30} aria-label="Meet now"><svg width="17" height="18" viewBox="0 0 17 18"><rect x="1" y="4" width="10" height="10" rx="1.500" fill="none" stroke="#111" strokeWidth="1.300" /><path d="M11 8L14.500 5.500V12.500L11 10M3 2Q7 0 11 2M3 16Q7 18.500 11 16" fill="none" stroke="#111" strokeWidth="1.200" /></svg></TrayButton>
          <TrayButton $w={30} aria-label="Battery"><svg width="21" height="16" viewBox="0 0 21 16"><path d="M6 3H18V5H20V11H18V13H6z" fill="none" stroke="#111" strokeWidth="1.300" /><path d="M7.500 5H17V11.500H7.500z" /><path d="M0 3h6v4H4V13H2V7H0zM1 0h1v3H1zM4 0h1v3H4z" /></svg></TrayButton>
          <TrayButton $w={30} aria-label="Wi-Fi"><svg width="17" height="17" viewBox="0 0 17 17"><path d="M1 16Q1 2 16 1" fill="none" stroke="#8b989f" strokeWidth="1.200" /><path d="M5 16Q5 6 16 5M9 16Q9 10 16 9" fill="none" stroke="#111" strokeWidth="1.300" /><circle cx="14" cy="14.500" r="1.800" /></svg></TrayButton>
          <TrayButton $w={30} aria-label="Volume"><svg width="20" height="18" viewBox="0 0 20 18"><path d="M.7 6H3.500L7.500 2V16L3.500 12H.7zM10 6Q12 9 10 12M13 4Q16 9 13 14" fill="none" stroke="#111" strokeWidth="1.300" /><path d="M16 1.500Q21 9 16 16.500" fill="none" stroke="#8b989f" /></svg></TrayButton>
          <TrayButton $w={44} aria-label="Input language">ENG</TrayButton>
          <Clock>{"11:48 PM\n6/27/2024"}</Clock>
          <TrayButton $w={44} aria-label="Notifications"><svg width="21" height="20" viewBox="0 0 21 20"><path d="M.7.7H20.300V15.300H13L10.500 18.500 8 15.300H.7z" fill="none" stroke="#111" strokeWidth="1.300" /></svg></TrayButton>
          <TrayButton $w={13} tabIndex={-1} aria-hidden />
          <ShowDesktop aria-label="Show desktop" />
        </Tray>
      </Taskbar>
      <PropertiesDialog />
    </Screen>
  );
}
